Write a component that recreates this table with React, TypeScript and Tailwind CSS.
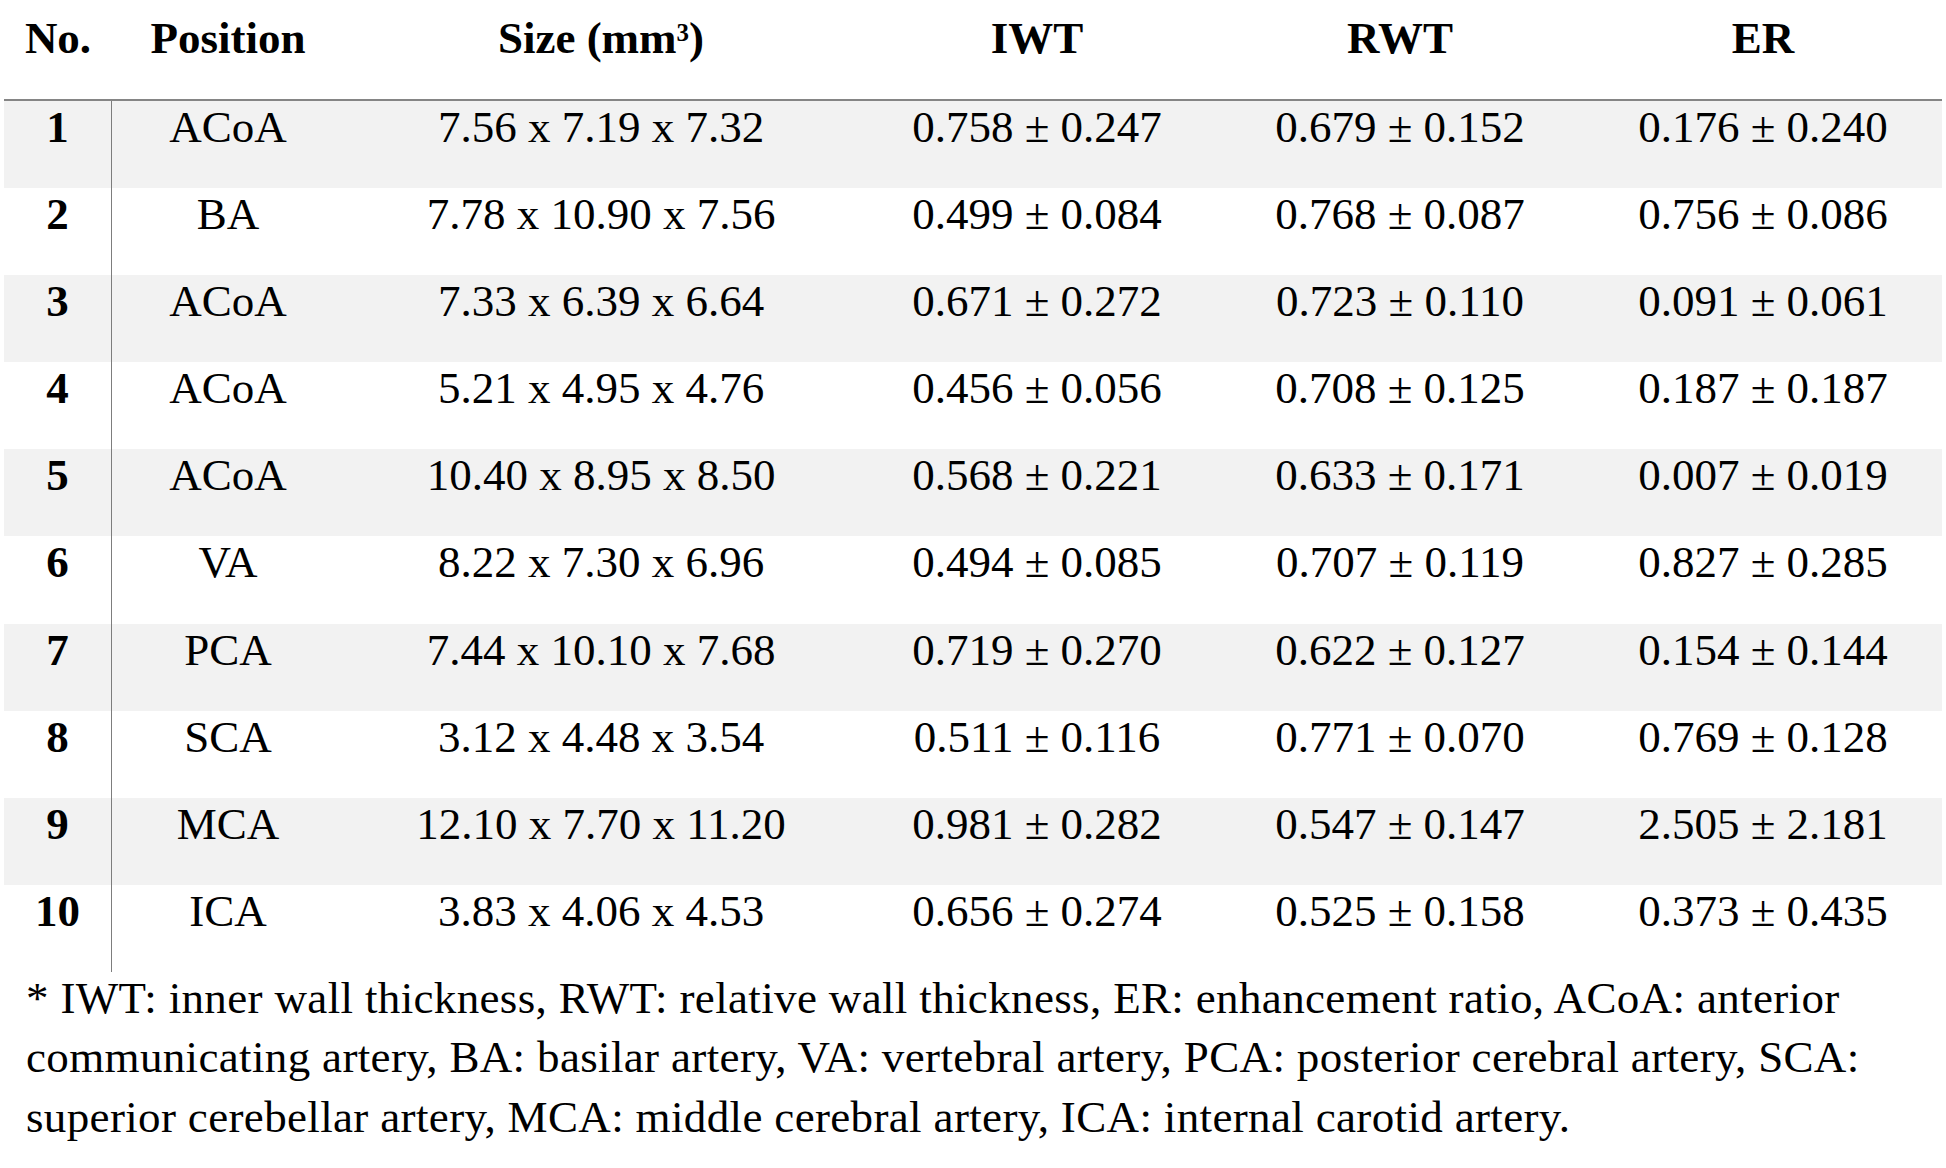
import React from "react";

const rows: [string, string, string, string, string, string][] = [
  ["1", "ACoA", "7.56 x 7.19 x 7.32", "0.758 ± 0.247", "0.679 ± 0.152", "0.176 ± 0.240"],
  ["2", "BA", "7.78 x 10.90 x 7.56", "0.499 ± 0.084", "0.768 ± 0.087", "0.756 ± 0.086"],
  ["3", "ACoA", "7.33 x 6.39 x 6.64", "0.671 ± 0.272", "0.723 ± 0.110", "0.091 ± 0.061"],
  ["4", "ACoA", "5.21 x 4.95 x 4.76", "0.456 ± 0.056", "0.708 ± 0.125", "0.187 ± 0.187"],
  ["5", "ACoA", "10.40 x 8.95 x 8.50", "0.568 ± 0.221", "0.633 ± 0.171", "0.007 ± 0.019"],
  ["6", "VA", "8.22 x 7.30 x 6.96", "0.494 ± 0.085", "0.707 ± 0.119", "0.827 ± 0.285"],
  ["7", "PCA", "7.44 x 10.10 x 7.68", "0.719 ± 0.270", "0.622 ± 0.127", "0.154 ± 0.144"],
  ["8", "SCA", "3.12 x 4.48 x 3.54", "0.511 ± 0.116", "0.771 ± 0.070", "0.769 ± 0.128"],
  ["9", "MCA", "12.10 x 7.70 x 11.20", "0.981 ± 0.282", "0.547 ± 0.147", "2.505 ± 2.181"],
  ["10", "ICA", "3.83 x 4.06 x 4.53", "0.656 ± 0.274", "0.525 ± 0.158", "0.373 ± 0.435"],
];

const grid = "grid grid-cols-[108px_232px_514px_358px_368px_1fr]";

export default function App() {
  return (
    <div
      className="w-[1946px] h-[1168px] bg-white text-black overflow-hidden"
      style={{ fontFamily: '"Liberation Serif", "Times New Roman", serif' }}
    >
      <div className="ml-[4px] w-[1938px]">
        {/* header */}
        <div className={`${grid} h-[99px] pt-[12px] text-[45px] leading-[52px] font-bold text-center`}>
          <div>No.</div>
          <div>Position</div>
          <div>
            Size (mm<sup className="text-[25px] top-[-12px]">3</sup>)
          </div>
          <div>IWT</div>
          <div>RWT</div>
          <div>ER</div>
        </div>
        <div className="h-[2px] bg-[#858585]" />
        {rows.map((r, i) => (
          <div
            key={r[0]}
            className={`${grid} h-[87.1px] text-[45px] leading-[52px] text-center ${
              i % 2 === 0 ? "bg-[#f2f2f2]" : "bg-white"
            }`}
          >
            <div className="font-bold border-r border-[#7d7d7d]">{r[0]}</div>
            <div>{r[1]}</div>
            <div>{r[2]}</div>
            <div>{r[3]}</div>
            <div>{r[4]}</div>
            <div>{r[5]}</div>
          </div>
        ))}
      </div>
      <p className="mt-[-3px] pl-[26px] text-[45px] leading-[59.5px] tracking-[0.35px] whitespace-nowrap">
        * IWT: inner wall thickness, RWT: relative wall thickness, ER: enhancement ratio, ACoA: anterior
        <br />
        communicating artery, BA: basilar artery, VA: vertebral artery, PCA: posterior cerebral artery, SCA:
        <br />
        superior cerebellar artery, MCA: middle cerebral artery, ICA: internal carotid artery.
      </p>
    </div>
  );
}
